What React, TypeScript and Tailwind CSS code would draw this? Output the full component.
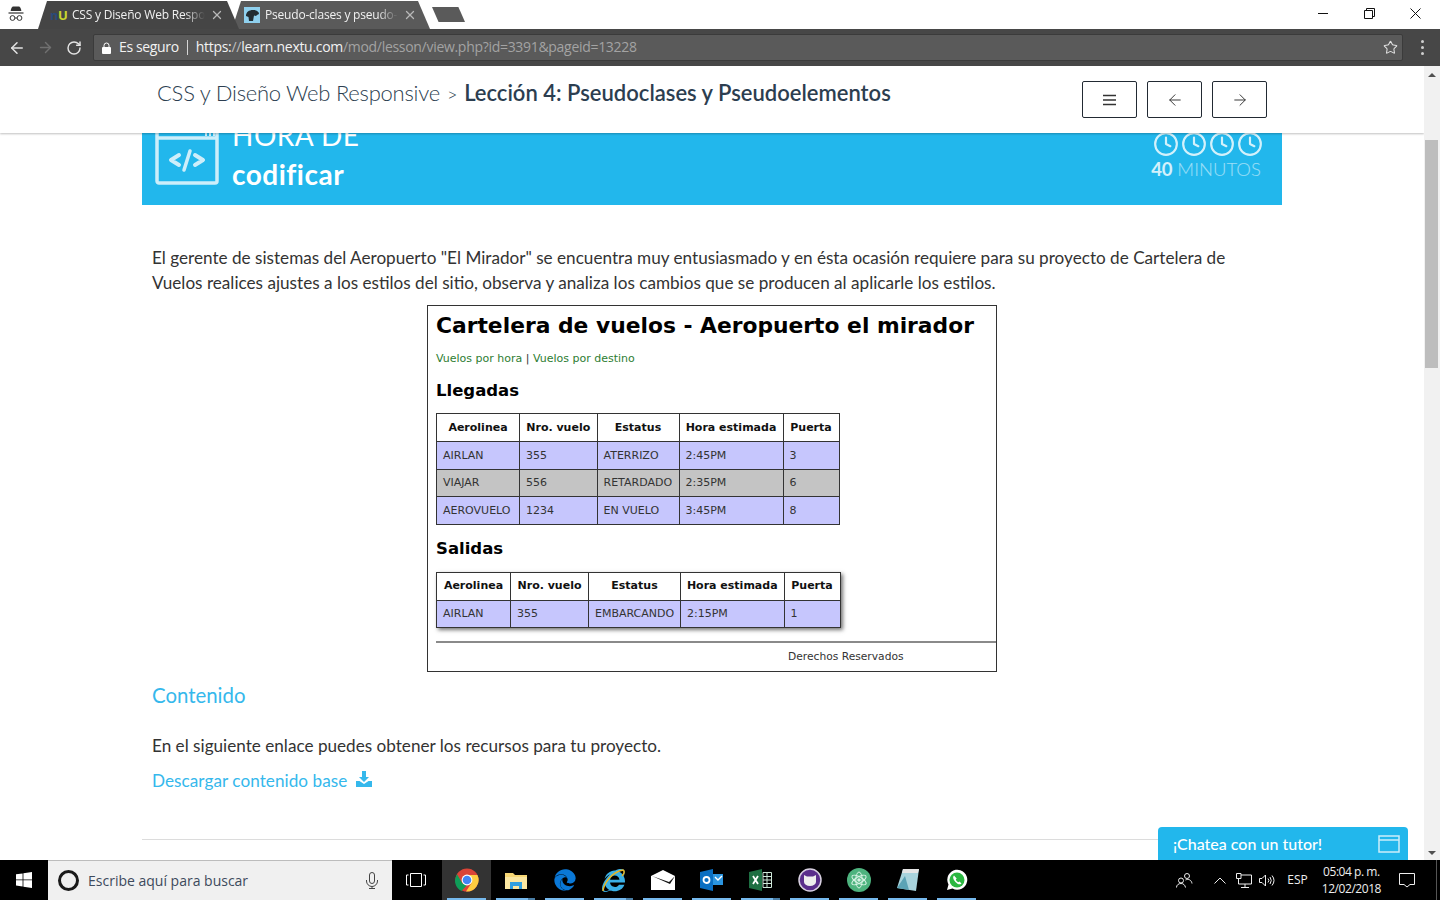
import { ArrowLeft, ArrowRight, Clock, RotateCw, Star, X } from 'lucide-react';
import { FaEdge, FaInternetExplorer } from 'react-icons/fa';
import type { ReactNode } from 'react';

const arrivals = [
  { airline: 'AIRLAN', flight: '355', status: 'ATERRIZO', time: '2:45PM', gate: '3', bg: 'bg-[#c6c6fd]' },
  { airline: 'VIAJAR', flight: '556', status: 'RETARDADO', time: '2:35PM', gate: '6', bg: 'bg-[#c4c4c4]' },
  { airline: 'AEROVUELO', flight: '1234', status: 'EN VUELO', time: '3:45PM', gate: '8', bg: 'bg-[#c6c6fd]' },
];

const departures = [
  { airline: 'AIRLAN', flight: '355', status: 'EMBARCANDO', time: '2:15PM', gate: '1', bg: 'bg-[#c6c6fd]' },
];

type Flight = (typeof arrivals)[number];

const cellHead = 'border border-[#333] bg-white pt-[1px] text-center text-[11px] font-bold text-[#111]';
const cell = 'border border-[#333] pl-[6px] pt-[1px] text-left text-[11px] font-normal text-[#333]';

function FlightTable({ rows, widths, shadow }: { rows: Flight[]; widths: string[]; shadow?: boolean }) {
  const heads = ['Aerolinea', 'Nro. vuelo', 'Estatus', 'Hora estimada', 'Puerta'];
  return (
    <table className={`table-fixed border-collapse ${shadow ? 'shadow-[2px_2px_4px_rgba(0,0,0,0.55)]' : ''}`}>
      <thead>
        <tr className="h-[28px]">
          {heads.map((h, i) => (
            <th key={h} className={`${cellHead} ${widths[i]}`}>
              {h}
            </th>
          ))}
        </tr>
      </thead>
      <tbody>
        {rows.map((r) => (
          <tr key={r.airline} className={`h-[27.5px] ${r.bg}`}>
            <td className={cell}>{r.airline}</td>
            <td className={cell}>{r.flight}</td>
            <td className={cell}>{r.status}</td>
            <td className={cell}>{r.time}</td>
            <td className={cell}>{r.gate}</td>
          </tr>
        ))}
      </tbody>
    </table>
  );
}

function Tab({ children, title, className, titleWidth }: { children: ReactNode; title: string; className: string; titleWidth: string }) {
  return (
    <div className={`flex h-[28px] items-center text-[12px] tracking-[-0.2px] text-[#f0f0f0] ${className}`}>
      {children}
      <span className={`overflow-hidden whitespace-nowrap [mask-image:linear-gradient(to_right,black_85%,transparent)] ${titleWidth}`}>
        {title}
      </span>
      <X size={14} strokeWidth={2.2} className="ml-[5px] text-[#b8b8b8]" />
    </div>
  );
}

function NavButton({ children }: { children: ReactNode }) {
  return (
    <button className="flex h-[37px] w-[55px] items-center justify-center rounded-[2px] border border-[#222a33] text-[#333]">
      {children}
    </button>
  );
}

function TaskIcon({ children, active, double }: { children: ReactNode; active?: boolean; double?: boolean }) {
  return (
    <div className={`relative flex h-[40px] w-[49px] shrink-0 items-center justify-center ${active ? 'bg-[#333]' : ''}`}>
      {children}
      <span className="absolute bottom-0 left-[5px] h-[2px] w-[39px] bg-[#76b9ed]">
        {double && <span className="absolute right-0 top-0 h-[2px] w-[7px] bg-[#4a7ea6]" />}
      </span>
    </div>
  );
}

function ChromeLogo() {
  return (
    <svg width="24" height="24" viewBox="0 0 24 24">
      <circle cx="12" cy="12" r="11.5" fill="#db4437" />
      <path d="M2 6.200 7.500 15.500 12 17l-5.500 6a11.500 11.500 0 0 1-4.500-16.800Z" fill="#0f9d58" />
      <path d="M12 7h10.400A11.500 11.500 0 0 1 11 23.500L16.500 15Z" fill="#ffcd40" />
      <circle cx="12" cy="12" r="5.400" fill="#fff" />
      <circle cx="12" cy="12" r="4.300" fill="#4285f4" />
    </svg>
  );
}

export default function App() {
  return (
    <div className="relative flex h-[900px] w-[1440px] flex-col overflow-hidden bg-white font-['Lato',sans-serif]">
      {/* browser tabs */}
      <div className="flex h-[29px] items-end bg-white font-['Open_Sans',sans-serif]">
        <div className="flex h-[28px] w-[38px] items-center justify-start pb-[3px] pl-[8px]">
          <svg width="16" height="16" viewBox="0 0 16 16" fill="none" stroke="#333">
            <path d="M3 4.500 4.500 1h7L13 4.500Z" fill="#333" />
            <path d="M0.500 7h15" strokeWidth="1.200" />
            <circle cx="4.500" cy="12" r="2.400" />
            <circle cx="11.500" cy="12" r="2.400" />
            <path d="M7 12h2" />
          </svg>
        </div>
        <Tab
          title="CSS y Diseño Web Respo"
          titleWidth="w-[133px]"
          className="relative z-10 w-[201px] bg-[#454545] pl-[12px] [clip-path:polygon(0_100%,9px_0,calc(100%-12px)_0,100%_100%)]"
        >
          <span className="mr-[5px] w-[17px] text-[13px] font-bold leading-none tracking-[-0.5px] text-[#c9d62e]">
            <span className="text-[#2a4a7a]">n</span>U
          </span>
        </Tab>
        <Tab
          title="Pseudo-clases y pseudo-"
          titleWidth="w-[133px]"
          className="-ml-[7px] w-[198px] bg-[#5a5a5a] pl-[12px] [clip-path:polygon(0_100%,9px_0,calc(100%-12px)_0,100%_100%)]"
        >
          <span className="mr-[5px] flex h-[16px] w-[16px] items-center justify-center bg-[#8fd0ee]">
            <svg width="13" height="11" viewBox="0 0 13 11" fill="#222d33">
              <path d="M0 6C0 2 3 0 7 0s6 2 6 4l-2 1-1 1-2-.5L7 11H3L2.500 7Z" />
            </svg>
          </span>
        </Tab>
        <div className="mb-[7px] ml-[2px] h-[15px] w-[33px] bg-[#5a5a5a] [clip-path:polygon(0_0,80%_0,100%_100%,20%_100%)]" />
        <div className="ml-auto mr-[2px] flex h-[27px] items-center self-start">
          <div className="flex w-[46px] justify-center">
            <span className="h-px w-[10px] bg-[#111]" />
          </div>
          <div className="flex w-[46px] justify-center">
            <svg width="11" height="11" viewBox="0 0 11 11" fill="none" stroke="#111">
              <path d="M.5 2.500h8v8h-8zM2.500 2.500v-2h8v8h-2" />
            </svg>
          </div>
          <div className="flex w-[46px] justify-center">
            <svg width="11" height="11" viewBox="0 0 11 11" stroke="#111">
              <path d="m.5.5 10 10M10.500.5l-10 10" />
            </svg>
          </div>
        </div>
      </div>

      {/* toolbar */}
      <div className="flex h-[37px] items-center bg-[#474747] font-['Open_Sans',sans-serif] text-[14px]">
        <ArrowLeft size={18} strokeWidth={2} className="ml-[8px] text-[#e3e3e3]" />
        <ArrowRight size={17} strokeWidth={2} className="ml-[11px] text-[#707070]" />
        <RotateCw size={16} strokeWidth={2.2} className="ml-[12px] text-[#e3e3e3]" />
        <div className="ml-[11px] flex h-[27px] w-[1310px] items-center rounded-[2px] border border-[#3b3b3b] bg-[#5a5a5a] pl-[8px]">
          <svg width="9" height="12" viewBox="0 0 9 12" className="shrink-0">
            <path d="M1 5h7a1 1 0 0 1 1 1v5a1 1 0 0 1-1 1H1a1 1 0 0 1-1-1V6a1 1 0 0 1 1-1Z" fill="#fff" />
            <path d="M2 5V3.500a2.500 2.500 0 0 1 5 0V5" fill="none" stroke="#fff" />
          </svg>
          <span className="-mt-[2px] ml-[8px] tracking-[-0.35px] text-[#f2f2f2]">Es seguro</span>
          <span className="ml-[8px] h-[15px] w-px bg-[#d5d5d5]" />
          <span className="-mt-[2px] ml-[8px] tracking-[-0.3px] text-[#f2f2f2]">
            https:<span className="text-[#bdbdbd]">//</span>learn.nextu.com
            <span className="text-[#a3a3a3]">/mod/lesson/view.php?id=3391&amp;pageid=13228</span>
          </span>
          <Star size={15} strokeWidth={1.7} className="ml-auto mr-[4px] text-[#e0e0e0]" />
        </div>
        <div className="ml-[18px] flex flex-col gap-[3px]">
          <span className="h-[3px] w-[3px] rounded-full bg-[#cfcfcf]" />
          <span className="h-[3px] w-[3px] rounded-full bg-[#cfcfcf]" />
          <span className="h-[3px] w-[3px] rounded-full bg-[#cfcfcf]" />
        </div>
      </div>

      {/* page */}
      <div className="flex h-[794px]">
        <div className="flex w-[1424px] flex-col overflow-hidden">
          <header className="relative z-10 flex h-[67px] shrink-0 items-start bg-white pl-[157px] pr-[157px] shadow-[0_1px_2px_rgba(0,0,0,0.25)]">
            <h1 className="mt-[11px] whitespace-nowrap text-[22px] font-light leading-[32px] tracking-[-0.25px] text-[#2c3e50]">
              CSS y Diseño Web Responsive<span className="ml-[7px] text-[18px]">&gt;</span>
              <span className="ml-[7px] font-semibold tracking-normal">Lección 4: Pseudoclases y Pseudoelementos</span>
            </h1>
            <div className="ml-auto mt-[15px] flex gap-[10px]">
              <NavButton>
                <svg width="13" height="12" viewBox="0 0 13 12" stroke="#333" strokeWidth="1.500">
                  <path d="M0 1.500h13M0 6h13M0 10.500h13" />
                </svg>
              </NavButton>
              <NavButton>
                <ArrowLeft size={18} strokeWidth={1.3} />
              </NavButton>
              <NavButton>
                <ArrowRight size={18} strokeWidth={1.3} />
              </NavButton>
            </div>
          </header>

          <main className="mx-[142px] flex flex-col">
            <section className="flex h-[72px] items-start overflow-hidden bg-[#22b7ec] pl-[13px] pr-[21px] text-white">
              <svg width="64" height="62" viewBox="0 0 64 62" fill="none" className="-mt-[10px] shrink-0 text-[#cdeefa]" stroke="currentColor">
                <rect x="2" y="4" width="60" height="56" rx="2" strokeWidth="3.500" />
                <path d="M2 15h60" strokeWidth="3.500" />
                <path d="M50 11.500h2M54 11.500h2M58 11.500h2" strokeWidth="3" />
                <path d="M16 37 24 32M16 37 24 42M48 37 40 32M48 37 40 42" strokeWidth="4" strokeLinecap="round" />
                <path d="M35 28 29 47" strokeWidth="3.500" strokeLinecap="round" />
              </svg>
              <div className="ml-[13px] -mt-[16px] flex flex-col">
                <span className="text-[28px] leading-[36px] tracking-[0.5px]">HORA DE</span>
                <span className="mt-[3px] text-[28px] font-bold leading-[36px] tracking-[0.5px]">codificar</span>
              </div>
              <div className="ml-auto -mt-[2px] flex flex-col items-center">
                <div className="flex translate-x-[2px] gap-[2px] text-white/80">
                  <Clock size={26} strokeWidth={2} />
                  <Clock size={26} strokeWidth={2} />
                  <Clock size={26} strokeWidth={2} />
                  <Clock size={26} strokeWidth={2} />
                </div>
                <span className="text-[18.5px] leading-[24px] text-white/55">
                  <span className="font-bold text-white/80">40</span> <span className="font-light">MINUTOS</span>
                </span>
              </div>
            </section>

            <p className="ml-[10px] mt-[40px] w-[1090px] text-[17.15px] leading-[25px] text-[#333]">
              El gerente de sistemas del Aeropuerto "El Mirador" se encuentra muy entusiasmado y en ésta ocasión requiere para su proyecto de Cartelera de Vuelos realices ajustes a los estilos del sitio, observa y analiza los cambios que se producen al aplicarle los estilos.
            </p>

            {/* embedded page capture */}
            <div className="ml-[285px] mt-[10px] flex h-[367px] w-[570px] shrink-0 flex-col border border-[#333] pl-[8px] font-['DejaVu_Sans',sans-serif]">
              <h2 className="mt-[5px] whitespace-nowrap text-[21.8px] font-bold leading-[30px] text-black">
                Cartelera de vuelos - Aeropuerto el mirador
              </h2>
              <p className="mt-[11px] text-[11px] leading-[14px] text-[#333]">
                <span className="text-[#2e7d32]">Vuelos por hora</span> | <span className="text-[#2e7d32]">Vuelos por destino</span>
              </p>
              <h3 className="mt-[14px] text-[16.5px] font-bold leading-[22px] text-black">Llegadas</h3>
              <div className="mt-[11px]">
                <FlightTable rows={arrivals} widths={['w-[83px]', 'w-[77.5px]', 'w-[82px]', 'w-[104px]', 'w-[56px]']} />
              </div>
              <h3 className="mt-[13px] text-[16.5px] font-bold leading-[22px] text-black">Salidas</h3>
              <div className="mt-[12px]">
                <FlightTable rows={departures} widths={['w-[74px]', 'w-[78px]', 'w-[92px]', 'w-[103.5px]', 'w-[56px]']} shadow />
              </div>
              <div className="mt-[13px] h-[2px] bg-[#8a8a8a]" />
              <p className="mt-[7px] pl-[352px] text-[10.7px] leading-[14px] text-[#333]">Derechos Reservados</p>
            </div>

            <h2 className="ml-[10px] mt-[10px] text-[20.4px] leading-[27px] text-[#35b8ec]">Contenido</h2>
            <p className="ml-[10px] mt-[24px] text-[17.15px] leading-[25px] text-[#333]">
              En el siguiente enlace puedes obtener los recursos para tu proyecto.
            </p>
            <a className="ml-[10px] mt-[10px] flex items-center gap-[9px] text-[17.15px] leading-[25px] tracking-[0.05px] text-[#35b8ec]">
              Descargar contenido base
              <svg width="16" height="16" viewBox="0 0 16 16" className="mb-[3px]" fill="#35b8ec">
                <path d="M6 0h4v6h3l-5 5-5-5h3Z" />
                <path d="M0 10h3.500L8 13l4.500-3H16v6H0Z" />
              </svg>
            </a>
            <div className="mt-[46px] h-px w-full bg-[#dcdcdc]" />
          </main>
        </div>

        {/* scrollbar */}
        <div className="flex w-[16px] flex-col items-center bg-[#f1f1f1]">
          <span className="mt-[7px] h-0 w-0 border-x-[4px] border-b-[4px] border-x-transparent border-b-[#505050]" />
          <span className="ml-[1px] mt-[63px] h-[228px] w-[13px] self-start bg-[#bdbdbd]" />
          <span className="mb-[5px] mt-auto h-0 w-0 border-x-[4px] border-t-[4px] border-x-transparent border-t-[#505050]" />
        </div>
      </div>

      {/* chat widget sits over the page */}
      <div className="absolute left-[1158px] top-[827px] z-20 flex h-[33px] w-[250px] items-center rounded-t-[4px] bg-[#22b7ec] pl-[15px] pr-[8px] text-[16px] font-medium text-white">
        ¡Chatea con un tutor!
        <svg width="22" height="18" viewBox="0 0 22 18" fill="none" stroke="#cdeefa" strokeWidth="1.500" className="ml-auto">
          <rect x="1" y="1" width="20" height="16" />
          <path d="M1 5h20" />
        </svg>
      </div>

      {/* windows taskbar */}
      <footer className="relative z-30 flex h-[40px] shrink-0 items-center bg-black font-['Open_Sans',sans-serif] text-white">
        <div className="flex h-[40px] w-[48px] items-center justify-center">
          <svg width="16" height="16" viewBox="0 0 16 16" fill="#fff">
            <path d="M0 2.300 6.600 1.400V7.500H0ZM7.400 1.300 16 0V7.500H7.400ZM0 8.300H6.600V14.500L0 13.600ZM7.400 8.300H16V16L7.400 14.700Z" />
          </svg>
        </div>
        <div className="flex h-[40px] w-[344px] items-center border-t border-[#bcbcbc] bg-[#f0f0f0] pl-[10px] pr-[14px] text-[14px] text-[#3d4a5c]">
          <span className="h-[21px] w-[21px] rounded-full border-[3px] border-[#1a1a1a]" />
          <span className="ml-[9px]">Escribe aquí para buscar</span>
          <svg width="12" height="17" viewBox="0 0 12 17" fill="none" stroke="#444" className="ml-auto">
            <rect x="3.500" y=".5" width="5" height="11" rx="2.500" />
            <path d="M.5 8v1a5.500 5.500 0 0 0 11 0V8M6 14.500v2M3 16.500h6" />
          </svg>
        </div>
        <div className="flex h-[40px] w-[50px] items-center justify-center pr-[2px]">
          <svg width="20" height="14" viewBox="0 0 20 14" fill="none" stroke="#fff">
            <path d="M4.500.5h11v13h-11zM2.500 2H.5v10h2M17.500 2h2v10h-2" />
          </svg>
        </div>
        <TaskIcon active>
          <ChromeLogo />
        </TaskIcon>
        <TaskIcon double>
          <svg width="22" height="18" viewBox="0 0 22 18">
            <path d="M0 2h8l2 2h12v14H0Z" fill="#f7d774" />
            <path d="M0 6h22v12H0Z" fill="#fbe7a1" />
            <path d="M5 11h12v7h-3v-3H8v3H5Z" fill="#2f9fe0" />
          </svg>
        </TaskIcon>
        <TaskIcon>
          <FaEdge size={22} className="text-[#0a78d7]" />
        </TaskIcon>
        <TaskIcon double>
          <span className="relative">
            <FaInternetExplorer size={23} className="text-[#3ab0e6]" />
            <svg width="23" height="23" viewBox="0 0 23 23" fill="none" stroke="#e5b627" strokeWidth="1.500" className="absolute left-0 top-0">
              <path d="M1 22C2 14 10 3 21 1c2 1 1 4-1 6" />
            </svg>
          </span>
        </TaskIcon>
        <TaskIcon>
          <svg width="24" height="20" viewBox="0 0 24 20">
            <path d="M0 6 12 0l12 6v14H0Z" fill="#fff" />
            <path d="M1 6 18 12 24 6 19 14Z" fill="#111" />
          </svg>
        </TaskIcon>
        <TaskIcon>
          <svg width="23" height="22" viewBox="0 0 23 22">
            <path d="M0 3 13 0v22L0 19Z" fill="#0a6fc2" />
            <circle cx="6.500" cy="11" r="3" fill="none" stroke="#fff" strokeWidth="1.800" />
            <path d="M13 5h10v11H13Z" fill="#2b95e0" />
            <path d="m15 8 3 3 4-4" fill="none" stroke="#fff" strokeWidth="1.400" />
          </svg>
        </TaskIcon>
        <TaskIcon double>
          <svg width="23" height="22" viewBox="0 0 23 22">
            <path d="M0 3 13 0v22L0 19Z" fill="#1d6f42" />
            <path d="m4 7 5 8M9 7l-5 8" stroke="#fff" strokeWidth="1.800" />
            <path d="M14 3.500h8.500v15H14ZM14 7.500h8.500M14 11h8.500M14 14.500h8.500M18 3.500v15" fill="none" stroke="#cfe8d9" />
          </svg>
        </TaskIcon>
        <TaskIcon>
          <svg width="24" height="24" viewBox="0 0 24 24">
            <circle cx="12" cy="12" r="11" fill="#5a2e8c" stroke="#d8d0e0" strokeWidth="1.500" />
            <path d="M6 7 9 8.500h6L18 7v7a6 4 0 0 1-12 0Z" fill="#eee" />
          </svg>
        </TaskIcon>
        <TaskIcon>
          <svg width="24" height="24" viewBox="0 0 24 24" fill="none">
            <circle cx="12" cy="12" r="12" fill="#4db37e" />
            <circle cx="12" cy="12" r="1.800" fill="#d8f3e5" />
            <ellipse cx="12" cy="12" rx="8" ry="3.200" stroke="#d8f3e5" transform="rotate(30 12 12)" />
            <ellipse cx="12" cy="12" rx="8" ry="3.200" stroke="#d8f3e5" transform="rotate(90 12 12)" />
            <ellipse cx="12" cy="12" rx="8" ry="3.200" stroke="#d8f3e5" transform="rotate(150 12 12)" />
          </svg>
        </TaskIcon>
        <TaskIcon>
          <svg width="22" height="22" viewBox="0 0 22 22">
            <path d="M6 0h16l-3 22L0 19Z" fill="#a8d3dc" />
            <path d="M6 0h16l-1 4H5Z" fill="#e5e5e5" />
            <path d="M0 19 8 7l4 14Z" fill="#5ba3b5" />
          </svg>
        </TaskIcon>
        <TaskIcon>
          <svg width="22" height="22" viewBox="0 0 22 22">
            <path d="M1 21 2.500 15.500A10 10 0 1 1 6.500 19.500Z" fill="#fff" />
            <circle cx="11" cy="11" r="7.500" fill="#2bb741" />
            <path d="M8 6.500c-2 2 0 5 2 7s4 2.500 5.500 1l-2-2-1.200.8c-1-.5-2-1.500-2.500-2.800l.9-1Z" fill="#fff" />
          </svg>
        </TaskIcon>

        <div className="ml-auto flex h-[40px] items-center text-[12px] text-[#eee]">
          <svg width="17" height="16" viewBox="0 0 17 16" fill="none" stroke="#eee">
            <circle cx="5" cy="8.500" r="2.500" />
            <circle cx="11" cy="4" r="2.500" />
            <path d="M.5 15.500c0-2.500 2-4 4.500-4s4 1.500 4.500 4M9.500 8c3-1.500 6 0 6.500 3.500" />
          </svg>
          <svg width="12" height="7" viewBox="0 0 12 7" fill="none" stroke="#eee" className="ml-[21px]">
            <path d="m.5 6.500 5.500-5.500 5.500 5.500" />
          </svg>
          <svg width="16" height="15" viewBox="0 0 16 15" fill="none" stroke="#eee" className="ml-[10px]">
            <path d="M3 .5H.5v5H5v-5ZM5 2h10.500v9h-13V6M9 11v3M5 14.500h8" />
          </svg>
          <svg width="16" height="13" viewBox="0 0 16 13" fill="none" stroke="#eee" className="ml-[7px]">
            <path d="M.5 4.500h2.500l3.500-3.500v11l-3.500-3.500H.5ZM9 4.500a3 3 0 0 1 0 4M11 3a6 6 0 0 1 0 7M13 1.500a8 8 0 0 1 0 10" />
          </svg>
          <span className="ml-[12px]">ESP</span>
          <div className="ml-[14px] flex flex-col items-center text-[12px] leading-[17px] tracking-[-0.45px]">
            <span>05:04 p. m.</span>
            <span>12/02/2018</span>
          </div>
          <svg width="16" height="15" viewBox="0 0 16 15" fill="none" stroke="#eee" className="ml-[18px]">
            <path d="M.5.5h15v11H11l-3 2.500-3-2.500H.5Z" />
          </svg>
          <span className="ml-[21px] mr-[3px] h-[40px] w-px bg-[#555]" />
        </div>
      </footer>
    </div>
  );
}
